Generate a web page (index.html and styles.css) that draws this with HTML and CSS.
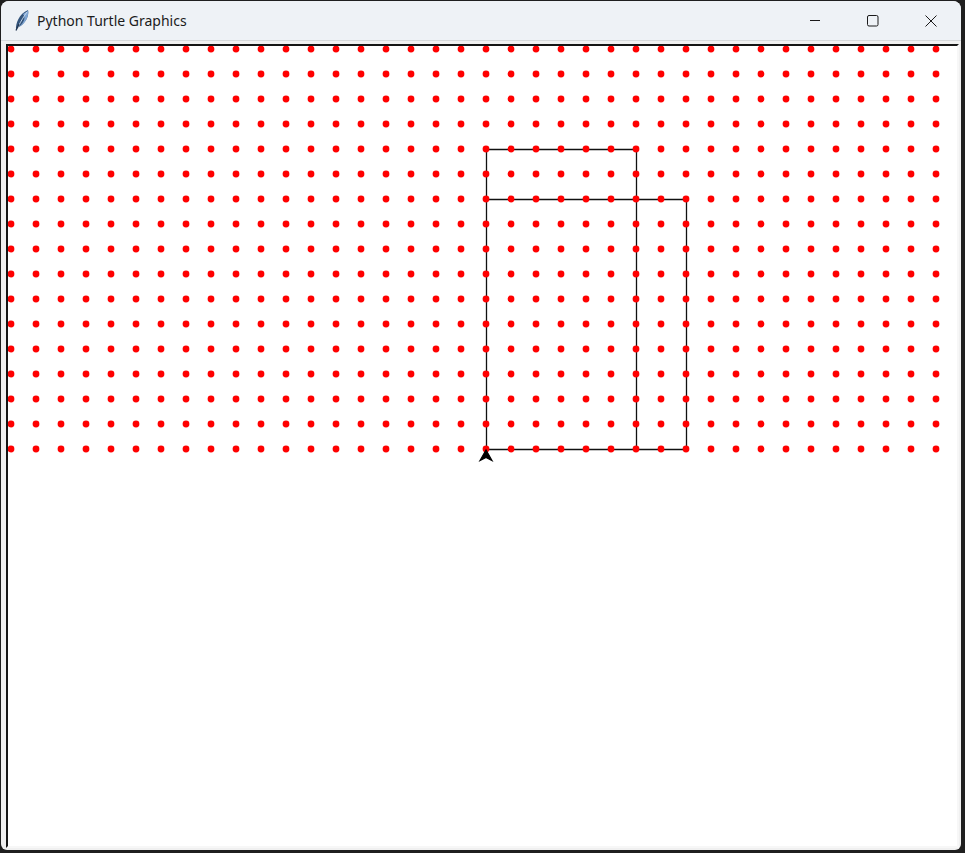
FILE: index.html
```html
<!DOCTYPE html>
<html>
<head>
<meta charset="utf-8">
<title>Python Turtle Graphics</title>
<link rel="stylesheet" href="styles.css">
</head>
<body>
<div class="window">
  <div class="titlebar">
    <svg class="app-icon" width="16" height="22" viewBox="0 0 16 22">
      <path d="M2 21 C1.5 14 5 5 14 1 C15.5 7 11 15 4 18.5 Z" fill="#34557c"/>
      <path d="M9 5 C12 3 14 2 14 1 C15.5 7 11 15 5 18 C10 13 12 9 9 5 Z" fill="#7fa6d3"/>
      <path d="M4 18 C7 12 10 7 13 3" stroke="#cfe0f3" stroke-width="0.9" fill="none"/>
      <path d="M2 21.5 L5 15" stroke="#223650" stroke-width="1.3"/>
    </svg>
    <span class="title">Python Turtle Graphics</span>
    <div class="controls">
      <div class="ctl">
        <svg width="12" height="12" viewBox="0 0 12 12"><path d="M1 5.5 H11" stroke="#1a1a1a" stroke-width="1"/></svg>
      </div>
      <div class="ctl">
        <svg width="12" height="12" viewBox="0 0 12 12"><rect x="0.5" y="0.5" width="10.5" height="10.5" rx="1.5" fill="none" stroke="#1a1a1a" stroke-width="1"/></svg>
      </div>
      <div class="ctl">
        <svg width="12" height="12" viewBox="0 0 12 12"><path d="M0.5 0.5 L11.5 11.5 M11.5 0.5 L0.5 11.5" stroke="#1a1a1a" stroke-width="1"/></svg>
      </div>
    </div>
  </div>
  <div class="client">
    <div class="canvas">
      <svg id="drawing" class="drawing" width="948" height="800" viewBox="0 0 948 800"></svg>
    </div>
  </div>
</div>
<script src="script.js"></script>
</body>
</html>
```

FILE: styles.css
```css
html, body {
  margin: 0;
  padding: 0;
}
body {
  background: #1f1f1f;
  width: 965px;
  height: 853px;
  overflow: hidden;
  font-family: "Segoe UI", "Noto Sans", "Open Sans", sans-serif;
}
.window {
  width: 960px;
  height: 849px;
  margin: 1px 0 0 1px;
  background: #f0f0f0;
  border-radius: 8px 8px 6px 6px;
  overflow: hidden;
  display: flex;
  flex-direction: column;
}
.titlebar {
  height: 39px;
  flex: none;
  background: #eef2f6;
  border-bottom: 1px solid #d6d8da;
  display: flex;
  align-items: center;
  padding-left: 13px;
}
.app-icon {
  margin-top: -1px;
}
.title {
  margin-left: 7px;
  font-size: 14px;
  color: #1b1b1b;
  margin-top: -1px;
}
.controls {
  margin-left: auto;
  display: flex;
  height: 100%;
  padding-right: 1px;
}
.ctl {
  width: 58px;
  height: 100%;
  display: flex;
  align-items: center;
  justify-content: center;
}
.client {
  flex: 1;
  padding: 3px 2px 3px 5px;
  display: flex;
}
.canvas {
  flex: 1;
  background: #ffffff;
  border-top: 2px solid #151515;
  border-left: 2px solid #151515;
  border-right: 2px solid #f7f7f7;
  border-bottom: 2px solid #f7f7f7;
  overflow: hidden;
}
.drawing {
  display: block;
}
```

FILE: script.js
```js
(function () {
  var NS = "http://www.w3.org/2000/svg";
  var svg = document.getElementById("drawing");
  function el(name, attrs) {
    var e = document.createElementNS(NS, name);
    for (var k in attrs) e.setAttribute(k, attrs[k]);
    svg.appendChild(e);
    return e;
  }
  // rectangles drawn by the turtle
  var path = "M478.5 403.5 V103.5 H628.5 V403.5 Z M478.5 153.5 H678.5 V403.5 H478.5";
  el("path", { d: path, fill: "none", stroke: "#111", "stroke-width": "1.3" });
  // dots
  for (var j = 0; j < 17; j++) {
    for (var i = 0; i < 38; i++) {
      el("circle", { cx: 3 + 25 * i, cy: 3 + 25 * j, r: 3.4, fill: "#ff0000" });
    }
  }
  // turtle (classic arrow) pointing up
  el("polygon", {
    points: "478,404 472,414.5 478,411.5 484,414.5",
    fill: "#000", stroke: "#000", "stroke-width": "1.2", "stroke-linejoin": "miter"
  });
})();
```
